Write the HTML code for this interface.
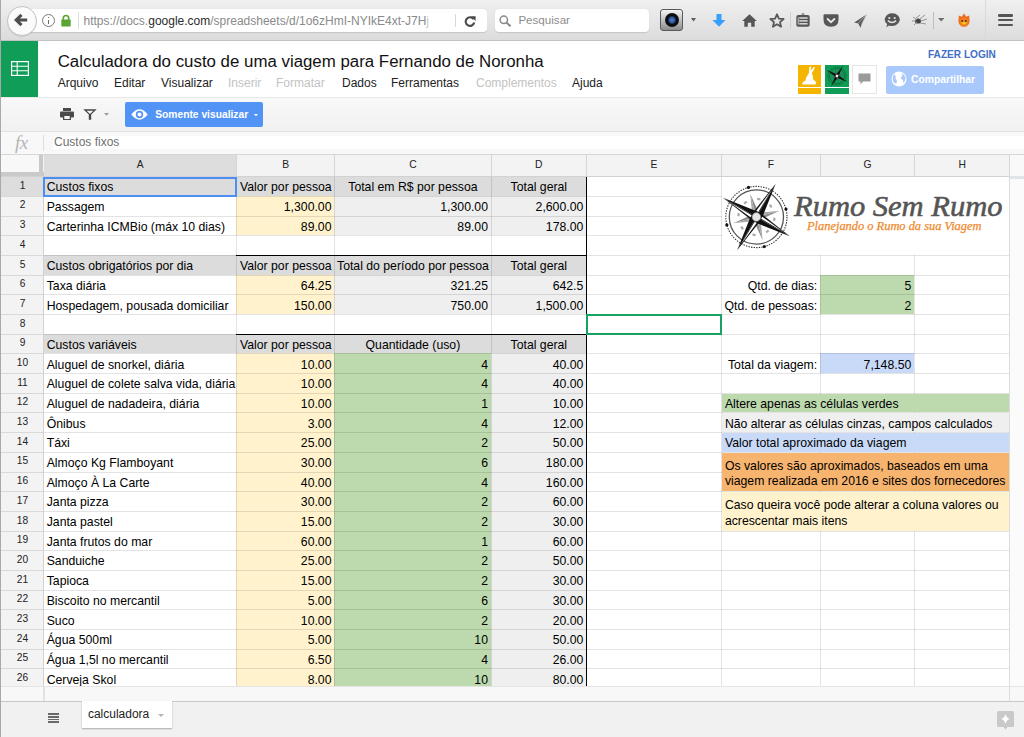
<!DOCTYPE html><html><head><meta charset="utf-8"><style>
html,body{margin:0;padding:0;}
body{width:1024px;height:737px;overflow:hidden;position:relative;font-family:"Liberation Sans", sans-serif;background:#fff;}
div{box-sizing:border-box;}
</style></head><body>
<div style="position:absolute;left:0px;top:0px;width:1024px;height:40px;background:linear-gradient(#f0f0f0,#dcdcdc);"></div>
<div style="position:absolute;left:0px;top:40px;width:1024px;height:1px;background:#c2c2c2;"></div>
<div style="position:absolute;left:14px;top:9px;width:473px;height:23px;background:#fff;border-radius:4px;box-shadow:0 0.5px 1px rgba(0,0,0,.12);"></div>
<div style="position:absolute;left:6.5px;top:5.5px;width:30px;height:30px;border-radius:50%;background:#fbfbfb;border:1px solid #c2c2c2;box-shadow:0 1px 1px rgba(0,0,0,.08);"></div>
<svg style="position:absolute;left:14px;top:13px" width="14" height="14" viewBox="0 0 14 14"><path d="M7.5 1.8 L2.2 7 L7.5 12.2 M2.6 7 H13.2" stroke="#4f4f4f" stroke-width="3.1" fill="none" stroke-linejoin="miter"/></svg>
<div style="position:absolute;left:42px;top:14px;width:13px;height:13px;border-radius:50%;border:1px solid #7a7a7a;"></div>
<div style="position:absolute;left:48px;top:17px;width:1.4px;height:1.4px;background:#6a6a6a;"></div>
<div style="position:absolute;left:48px;top:19.5px;width:1.4px;height:4.5px;background:#6a6a6a;"></div>
<svg style="position:absolute;left:61px;top:14px" width="10" height="13" viewBox="0 0 10 13"><path d="M2.3 6 V4.2 A2.7 2.7 0 0 1 7.7 4.2 V6" stroke="#5ba532" stroke-width="1.7" fill="none"/><rect x="0.3" y="5.6" width="9.4" height="6.8" fill="#5ba532" rx="0.6"/></svg>
<div style="position:absolute;left:78px;top:12px;width:1px;height:17px;background:#dcdcdc;"></div>
<div style="position:absolute;left:83.5px;top:14px;font-size:12px;line-height:14px;color:#8a8a8a;white-space:nowrap;">https://docs.<span style="color:#2b2b2b">google.com</span>/spreadsheets/d/1o6zHmI-NYIkE4xt-J7H<span style="color:#c8c8c8">j</span></div>
<div style="position:absolute;left:455px;top:14px;width:1px;height:13px;background:#d8d8d8;"></div>
<svg style="position:absolute;left:464px;top:16px" width="12" height="11" viewBox="0 0 12 11"><path d="M9.6 3.2 A4.3 4.3 0 1 0 10.2 6.5" stroke="#4a4a4a" stroke-width="2.1" fill="none"/><path d="M6.8 0.3 L11.6 0.3 L11.6 5 Z" fill="#4a4a4a"/></svg>
<div style="position:absolute;left:494.5px;top:9px;width:154px;height:23px;background:#fff;border-radius:4px;box-shadow:0 0.5px 1px rgba(0,0,0,.12);"></div>
<svg style="position:absolute;left:499px;top:15px" width="13" height="12" viewBox="0 0 13 12"><circle cx="4.8" cy="4.8" r="3.7" stroke="#8a8a8a" stroke-width="1.5" fill="none"/><path d="M7.5 7.5 L11.6 11.3" stroke="#8a8a8a" stroke-width="2" /></svg>
<div style="position:absolute;left:518.4px;top:13px;font-size:11.6px;line-height:14px;color:#8c8c8c;white-space:nowrap;">Pesquisar</div>
<div style="position:absolute;left:660px;top:9px;width:23px;height:22px;border-radius:3px;background:linear-gradient(#f4f4f4,#8d8d8d);border:1px solid #5a5a5a;"></div>
<div style="position:absolute;left:664.5px;top:13px;width:14px;height:14px;border-radius:50%;background:radial-gradient(circle at 50% 50%,#5a86d0 0,#2a4f90 30%,#0a0a12 45%,#111 70%,#333 100%);"></div>
<svg style="position:absolute;left:691px;top:18px" width="6" height="4"><path d="M0 0 H5 L2.5 3.5Z" fill="#5a5a5a"/></svg>
<svg style="position:absolute;left:712px;top:14px" width="14" height="13" viewBox="0 0 14 13"><path d="M4.5 0 H9.5 V6 H13.5 L7 12.8 L0.5 6 H4.5 Z" fill="#37a0fb"/></svg>
<svg style="position:absolute;left:742px;top:14px" width="15" height="13" viewBox="0 0 15 13"><path d="M7.5 0.3 L14.8 7 L12.7 7 L12.7 12.8 L9.2 12.8 L9.2 8.8 L5.8 8.8 L5.8 12.8 L2.3 12.8 L2.3 7 L0.2 7 Z" fill="#565656"/></svg>
<svg style="position:absolute;left:769px;top:13px" width="16" height="15" viewBox="0 0 16 15"><path d="M8 1.3 L9.9 5.6 L14.6 6 L11 9.1 L12.1 13.7 L8 11.3 L3.9 13.7 L5 9.1 L1.4 6 L6.1 5.6 Z" stroke="#575757" stroke-width="1.8" fill="none" stroke-linejoin="round"/></svg>
<div style="position:absolute;left:790px;top:12px;width:1px;height:17px;background:#cfcfcf;"></div>
<svg style="position:absolute;left:796px;top:13px" width="14" height="14" viewBox="0 0 14 14"><path d="M5 1.6 L7 0 L9 1.6 Z" fill="#555"/><rect x="0.3" y="2" width="13.4" height="11.7" rx="2" fill="#565656"/><rect x="3.3" y="4.3" width="8.3" height="1.4" fill="#e4e4e4"/><rect x="3.3" y="7.2" width="8.3" height="1.4" fill="#e4e4e4"/><rect x="3.3" y="10.1" width="8.3" height="1.4" fill="#e4e4e4"/><rect x="1.8" y="4.3" width="0.8" height="7.2" fill="#e4e4e4"/></svg>
<svg style="position:absolute;left:823px;top:14px" width="16" height="13" viewBox="0 0 16 13"><path d="M0.5 1.5 Q0.5 0.2 1.8 0.2 H14.2 Q15.5 0.2 15.5 1.5 V5.5 Q15.5 12.8 8 12.8 Q0.5 12.8 0.5 5.5 Z" fill="#575757"/><path d="M4.6 5 L8 8.2 L11.4 5" stroke="#e6e6e6" stroke-width="1.9" fill="none" stroke-linecap="round"/></svg>
<svg style="position:absolute;left:854px;top:14px" width="13" height="14" viewBox="0 0 13 14"><path d="M12.8 0.2 L0.2 8.6 L4.2 9.4 L6.6 13.8 L7.6 10.4 Z" fill="#5b5b5b"/><path d="M4.2 9.4 L12.8 0.2 L7.6 10.4" stroke="#d8d8d8" stroke-width="0.6" fill="none"/></svg>
<svg style="position:absolute;left:884px;top:13px" width="16" height="15" viewBox="0 0 16 15"><path d="M8 0.3 A7.6 6.3 0 1 1 5.2 12.4 L2.2 14.2 L3.2 11.2 A7.6 6.3 0 0 1 8 0.3 Z" fill="#575757"/><circle cx="5.3" cy="5" r="1.1" fill="#e4e4e4"/><circle cx="10.7" cy="5" r="1.1" fill="#e4e4e4"/><path d="M3.8 7.6 Q8 11.2 12.2 7.6" stroke="#e4e4e4" stroke-width="1.4" fill="none"/></svg>
<svg style="position:absolute;left:911px;top:14px" width="17" height="12" viewBox="0 0 17 12"><ellipse cx="7" cy="7" rx="3" ry="2.6" fill="#444"/><path d="M2 3 L6 6 M3 11 L6 8 M9 5 L14 1 M10 7 L16 5 M9 9 L15 10 M5 4 L9 1 M1 7 L5 7" stroke="#8a8a8a" stroke-width="0.9"/></svg>
<div style="position:absolute;left:933px;top:12px;width:1px;height:17px;background:#bdbdbd;"></div>
<svg style="position:absolute;left:938px;top:18px" width="7" height="4"><path d="M0 0 H6.4 L3.2 3.6Z" fill="#6b6b6b"/></svg>
<svg style="position:absolute;left:957px;top:13px" width="14" height="15" viewBox="0 0 14 15"><path d="M7 0.5 L9.2 3.8 L12.2 2.5 L12.4 6.5 A5.6 5.6 0 1 1 1.6 6.5 L1.8 2.5 L4.8 3.8 Z" fill="#ee6a1c"/><circle cx="7" cy="9.2" r="4.6" fill="#f27d20"/><path d="M4 9.5 Q7 13.8 10 9.5 Q7 8 4 9.5Z" fill="#f8c313"/><circle cx="5.2" cy="8" r="0.9" fill="#5a2a10"/><circle cx="8.8" cy="8" r="0.9" fill="#5a2a10"/></svg>
<div style="position:absolute;left:985px;top:0px;width:1px;height:40px;background:#d9d9d9;"></div>
<div style="position:absolute;left:998px;top:14px;width:15px;height:2.6px;border-radius:1.3px;background:#555;"></div>
<div style="position:absolute;left:998px;top:18.8px;width:15px;height:2.6px;border-radius:1.3px;background:#555;"></div>
<div style="position:absolute;left:998px;top:23.6px;width:15px;height:2.6px;border-radius:1.3px;background:#555;"></div>
<div style="position:absolute;left:1px;top:41px;width:37px;height:56px;background:#0f9d58;"></div>
<svg style="position:absolute;left:11px;top:61px" width="18" height="15" viewBox="0 0 18 15"><rect x="0.6" y="0.6" width="16.8" height="13.8" fill="none" stroke="#fff" stroke-width="1.2"/><path d="M0.6 5.2 H17.4 M0.6 9.8 H17.4 M6.2 0.6 V14.4" stroke="#fff" stroke-width="1.1"/></svg>
<div style="position:absolute;left:57.7px;top:51.7px;font-size:16.85px;line-height:19px;color:#111;white-space:nowrap;">Calculadora do custo de uma viagem para Fernando de Noronha</div>
<div style="position:absolute;left:57.7px;top:75.8px;font-size:12px;line-height:14px;color:#222;white-space:nowrap;">Arquivo</div>
<div style="position:absolute;left:114px;top:75.8px;font-size:12px;line-height:14px;color:#222;white-space:nowrap;">Editar</div>
<div style="position:absolute;left:161px;top:75.8px;font-size:12px;line-height:14px;color:#222;white-space:nowrap;">Visualizar</div>
<div style="position:absolute;left:228px;top:75.8px;font-size:12px;line-height:14px;color:#c3c3c3;white-space:nowrap;">Inserir</div>
<div style="position:absolute;left:276px;top:75.8px;font-size:12px;line-height:14px;color:#c3c3c3;white-space:nowrap;">Formatar</div>
<div style="position:absolute;left:342px;top:75.8px;font-size:12px;line-height:14px;color:#222;white-space:nowrap;">Dados</div>
<div style="position:absolute;left:391px;top:75.8px;font-size:12px;line-height:14px;color:#222;white-space:nowrap;">Ferramentas</div>
<div style="position:absolute;left:476px;top:75.8px;font-size:12px;line-height:14px;color:#c3c3c3;white-space:nowrap;">Complementos</div>
<div style="position:absolute;left:572px;top:75.8px;font-size:12px;line-height:14px;color:#222;white-space:nowrap;">Ajuda</div>
<div style="position:absolute;left:928px;top:48.5px;font-size:10.1px;line-height:12px;font-weight:bold;color:#3f6fc6;white-space:nowrap;">FAZER LOGIN</div>
<div style="position:absolute;left:798px;top:65px;width:23px;height:29px;background:#f4b400;"></div>
<div style="position:absolute;left:798px;top:87px;width:23px;height:1px;background:#fff;"></div>
<svg style="position:absolute;left:798px;top:65px" width="23" height="22" viewBox="0 0 23 22"><path d="M11.5 1.5 Q13 1 13.2 2.5 L12.6 6 L15.5 2.2 Q16.8 1.6 16.8 3 L13.8 8.5 Q15.5 11 15 14 L17.5 16.5 Q19 18 17.5 19.5 L4.5 19.5 Q3.5 18.5 5 17 L7.5 15.5 Q8 11.5 10.8 8.6 Z" fill="#fff"/></svg>
<div style="position:absolute;left:825px;top:65px;width:24px;height:29px;background:#0f9d58;"></div>
<div style="position:absolute;left:825px;top:87px;width:24px;height:1px;background:#fff;"></div>
<svg style="position:absolute;left:825px;top:65px" width="24" height="22" viewBox="0 0 24 22"><circle cx="12" cy="11" r="9" stroke="#062" stroke-width="1" stroke-dasharray="1.2 0.9" fill="none"/><circle cx="12" cy="11" r="7.5" stroke="#1b4a2c" stroke-width="0.6" fill="none"/><path d="M13.39 11.80 L18.00 0.61 L10.61 10.20 Z" fill="#111"/><path d="M11.20 12.39 L22.39 17.00 L12.80 9.61 Z" fill="#111"/><path d="M10.61 10.20 L6.00 21.39 L13.39 11.80 Z" fill="#111"/><path d="M12.80 9.61 L1.61 5.00 L11.20 12.39 Z" fill="#111"/><path d="M12.26 11.97 L18.76 9.19 L11.74 10.03 Z" fill="#555"/><path d="M11.03 11.26 L13.81 17.76 L12.97 10.74 Z" fill="#555"/><path d="M11.74 10.03 L5.24 12.81 L12.26 11.97 Z" fill="#555"/><path d="M12.97 10.74 L10.19 4.24 L11.03 11.26 Z" fill="#555"/><circle cx="12" cy="11" r="1.2" fill="#eee"/></svg>
<div style="position:absolute;left:852px;top:65px;width:25px;height:29px;background:#fff;border:1px solid #e6e6e6;"></div>
<svg style="position:absolute;left:858px;top:73px" width="13" height="12" viewBox="0 0 13 12"><path d="M0.5 0.5 H12.5 V8.5 H5 L2.5 11.5 V8.5 H0.5 Z" fill="#9a9a9a"/></svg>
<div style="position:absolute;left:886px;top:65.5px;width:98px;height:28px;background:#a9c8fb;border-radius:2px;"></div>
<svg style="position:absolute;left:891px;top:71px" width="16" height="16" viewBox="0 0 16 16"><circle cx="8" cy="8" r="7.5" fill="#fff"/><path d="M3 3.5 Q5.5 5 4.5 7.5 Q6.5 9 5.5 12.5 Q3.5 13 2 10 Q1 6 3 3.5Z M9 1.5 Q12.5 3 11 5.5 Q9 6 10.5 8 Q13 9 12 12.5 Q14.5 10 14.5 7 Q14 3 9 1.5Z" fill="#a9c8fb"/></svg>
<div style="position:absolute;left:911px;top:73.5px;font-size:10.3px;line-height:12px;font-weight:bold;color:#fff;white-space:nowrap;">Compartilhar</div>
<div style="position:absolute;left:0px;top:97px;width:1024px;height:1px;background:#e9e9e9;"></div>
<div style="position:absolute;left:1px;top:98px;width:1023px;height:33px;background:linear-gradient(#f8f8f8,#f1f1f1);"></div>
<div style="position:absolute;left:1px;top:131px;width:1023px;height:1px;background:#e2e2e2;"></div>
<svg style="position:absolute;left:60px;top:108px" width="14" height="12" viewBox="0 0 14 12"><rect x="3" y="0" width="8" height="3" fill="#4a4a4a"/><rect x="0" y="3.5" width="14" height="6" rx="1" fill="#4a4a4a"/><rect x="3" y="7" width="8" height="5" fill="#4a4a4a"/><rect x="4.3" y="8" width="5.4" height="3" fill="#f4f4f4"/></svg>
<svg style="position:absolute;left:83px;top:109px" width="14" height="11" viewBox="0 0 14 11"><path d="M0.3 0.3 H13.7 L8.2 5.5 V10.8 H5.8 V5.5 Z" fill="#454545"/><path d="M3.6 1.8 H10.4 L7 5 Z" fill="#f4f4f4"/></svg>
<svg style="position:absolute;left:104px;top:113px" width="5" height="3"><path d="M0 0 H5 L2.5 2.8Z" fill="#9a9a9a"/></svg>
<div style="position:absolute;left:125px;top:102px;width:138px;height:25px;background:#5294f5;border-radius:2px;"></div>
<svg style="position:absolute;left:131px;top:107.5px" width="17" height="13" viewBox="0 0 17 13"><path d="M0.3 6.5 Q8.5 -3.8 16.7 6.5 Q8.5 16.8 0.3 6.5Z" fill="#fff"/><circle cx="8.5" cy="6.5" r="3.7" fill="#5294f5"/><circle cx="8.5" cy="6.5" r="2" fill="#fff"/></svg>
<div style="position:absolute;left:155.2px;top:109px;font-size:10.27px;line-height:12px;font-weight:bold;color:#fff;white-space:nowrap;">Somente visualizar</div>
<svg style="position:absolute;left:254px;top:114px" width="4" height="3"><path d="M0 0 H4 L2 2.2Z" fill="#fff"/></svg>
<div style="position:absolute;left:1px;top:132px;width:1023px;height:23px;background:#f8f8f8;"></div>
<div style="position:absolute;left:53px;top:136px;width:971px;height:13px;background:#fff;"></div>
<div style="position:absolute;left:15px;top:134px;font-family:'Liberation Serif',serif;font-style:italic;font-size:19px;line-height:18px;color:#b5b5b5;white-space:nowrap;letter-spacing:-0.5px;">fx</div>
<div style="position:absolute;left:43px;top:135px;width:1px;height:16px;background:#dcdcdc;"></div>
<div style="position:absolute;left:54px;top:135px;font-size:12px;line-height:14px;color:#707070;white-space:nowrap;">Custos fixos</div>
<div style="position:absolute;left:1px;top:154px;width:1023px;height:1px;background:#d6d6d6;"></div>
<div style="position:absolute;left:1px;top:155px;width:1023px;height:21px;background:#f3f3f3;"></div>
<div style="position:absolute;left:1px;top:155px;width:39px;height:17px;background:#f8f8f8;"></div>
<div style="position:absolute;left:39px;top:155px;width:4px;height:21px;background:#c9c9c9;"></div>
<div style="position:absolute;left:1px;top:172px;width:43px;height:4px;background:#c9c9c9;"></div>
<div style="position:absolute;left:44px;top:155px;width:192px;height:21px;background:#dddddd;"></div>
<div style="position:absolute;left:236px;top:155px;width:1px;height:21px;background:#d6d6d6;"></div>
<div style="position:absolute;left:334px;top:155px;width:1px;height:21px;background:#d6d6d6;"></div>
<div style="position:absolute;left:491px;top:155px;width:1px;height:21px;background:#d6d6d6;"></div>
<div style="position:absolute;left:586px;top:155px;width:1px;height:21px;background:#d6d6d6;"></div>
<div style="position:absolute;left:721px;top:155px;width:1px;height:21px;background:#d6d6d6;"></div>
<div style="position:absolute;left:820px;top:155px;width:1px;height:21px;background:#d6d6d6;"></div>
<div style="position:absolute;left:914px;top:155px;width:1px;height:21px;background:#d6d6d6;"></div>
<div style="position:absolute;left:1009px;top:155px;width:1px;height:21px;background:#d6d6d6;"></div>
<div style="position:absolute;left:43px;top:176px;width:967px;height:1px;background:#cfcfcf;"></div>
<div style="position:absolute;left:43.4px;top:159.4px;width:193.5px;text-align:center;font-size:10.3px;line-height:12px;color:#222;">A</div>
<div style="position:absolute;left:236.9px;top:159.4px;width:97.8px;text-align:center;font-size:10.3px;line-height:12px;color:#222;">B</div>
<div style="position:absolute;left:334.7px;top:159.4px;width:156.5px;text-align:center;font-size:10.3px;line-height:12px;color:#222;">C</div>
<div style="position:absolute;left:491.2px;top:159.4px;width:95.3px;text-align:center;font-size:10.3px;line-height:12px;color:#222;">D</div>
<div style="position:absolute;left:586.5px;top:159.4px;width:135.1px;text-align:center;font-size:10.3px;line-height:12px;color:#222;">E</div>
<div style="position:absolute;left:721.6px;top:159.4px;width:98.8px;text-align:center;font-size:10.3px;line-height:12px;color:#222;">F</div>
<div style="position:absolute;left:820.4px;top:159.4px;width:94.1px;text-align:center;font-size:10.3px;line-height:12px;color:#222;">G</div>
<div style="position:absolute;left:914.5px;top:159.4px;width:95.3px;text-align:center;font-size:10.3px;line-height:12px;color:#222;">H</div>
<div style="position:absolute;left:1010px;top:155px;width:14px;height:21px;background:#f9f9f9;"></div>
<div style="position:absolute;left:1009px;top:176px;width:15px;height:511px;background:#fbfbfb;"></div>
<div style="position:absolute;left:1010px;top:176px;width:14px;height:3px;background:#e2e5e8;"></div>
<div style="position:absolute;left:1px;top:176px;width:43px;height:511px;background:#f3f3f3;"></div>
<div style="position:absolute;left:43px;top:176px;width:966px;height:511px;background:#fff;"></div>
<div style="position:absolute;left:43px;top:176px;width:543px;height:20px;background:#dcdcdc;"></div>
<div style="position:absolute;left:43px;top:255px;width:543px;height:20px;background:#dcdcdc;"></div>
<div style="position:absolute;left:43px;top:334px;width:543px;height:19px;background:#dcdcdc;"></div>
<div style="position:absolute;left:236px;top:196px;width:98px;height:39px;background:#fff2cc;"></div>
<div style="position:absolute;left:334px;top:196px;width:252px;height:39px;background:#efefef;"></div>
<div style="position:absolute;left:236px;top:275px;width:98px;height:39px;background:#fff2cc;"></div>
<div style="position:absolute;left:334px;top:275px;width:252px;height:39px;background:#efefef;"></div>
<div style="position:absolute;left:236px;top:353px;width:98px;height:334px;background:#fff2cc;"></div>
<div style="position:absolute;left:334px;top:353px;width:157px;height:334px;background:#bcdaae;"></div>
<div style="position:absolute;left:491px;top:353px;width:95px;height:334px;background:#efefef;"></div>
<div style="position:absolute;left:820px;top:275px;width:94px;height:39px;background:#bcdaae;"></div>
<div style="position:absolute;left:820px;top:353px;width:94px;height:20px;background:#c9daf8;"></div>
<div style="position:absolute;left:1px;top:196px;width:1008px;height:1px;background:rgba(0,0,0,0.11);"></div>
<div style="position:absolute;left:1px;top:216px;width:1008px;height:1px;background:rgba(0,0,0,0.11);"></div>
<div style="position:absolute;left:1px;top:235px;width:1008px;height:1px;background:rgba(0,0,0,0.11);"></div>
<div style="position:absolute;left:1px;top:255px;width:1008px;height:1px;background:rgba(0,0,0,0.11);"></div>
<div style="position:absolute;left:1px;top:275px;width:1008px;height:1px;background:rgba(0,0,0,0.11);"></div>
<div style="position:absolute;left:1px;top:294px;width:1008px;height:1px;background:rgba(0,0,0,0.11);"></div>
<div style="position:absolute;left:1px;top:314px;width:1008px;height:1px;background:rgba(0,0,0,0.11);"></div>
<div style="position:absolute;left:1px;top:334px;width:1008px;height:1px;background:rgba(0,0,0,0.11);"></div>
<div style="position:absolute;left:1px;top:353px;width:1008px;height:1px;background:rgba(0,0,0,0.11);"></div>
<div style="position:absolute;left:1px;top:373px;width:1008px;height:1px;background:rgba(0,0,0,0.11);"></div>
<div style="position:absolute;left:1px;top:393px;width:1008px;height:1px;background:rgba(0,0,0,0.11);"></div>
<div style="position:absolute;left:1px;top:412px;width:1008px;height:1px;background:rgba(0,0,0,0.11);"></div>
<div style="position:absolute;left:1px;top:432px;width:1008px;height:1px;background:rgba(0,0,0,0.11);"></div>
<div style="position:absolute;left:1px;top:452px;width:1008px;height:1px;background:rgba(0,0,0,0.11);"></div>
<div style="position:absolute;left:1px;top:472px;width:1008px;height:1px;background:rgba(0,0,0,0.11);"></div>
<div style="position:absolute;left:1px;top:491px;width:1008px;height:1px;background:rgba(0,0,0,0.11);"></div>
<div style="position:absolute;left:1px;top:511px;width:1008px;height:1px;background:rgba(0,0,0,0.11);"></div>
<div style="position:absolute;left:1px;top:531px;width:1008px;height:1px;background:rgba(0,0,0,0.11);"></div>
<div style="position:absolute;left:1px;top:550px;width:1008px;height:1px;background:rgba(0,0,0,0.11);"></div>
<div style="position:absolute;left:1px;top:570px;width:1008px;height:1px;background:rgba(0,0,0,0.11);"></div>
<div style="position:absolute;left:1px;top:590px;width:1008px;height:1px;background:rgba(0,0,0,0.11);"></div>
<div style="position:absolute;left:1px;top:609px;width:1008px;height:1px;background:rgba(0,0,0,0.11);"></div>
<div style="position:absolute;left:1px;top:629px;width:1008px;height:1px;background:rgba(0,0,0,0.11);"></div>
<div style="position:absolute;left:1px;top:649px;width:1008px;height:1px;background:rgba(0,0,0,0.11);"></div>
<div style="position:absolute;left:1px;top:668px;width:1008px;height:1px;background:rgba(0,0,0,0.11);"></div>
<div style="position:absolute;left:1px;top:688px;width:1008px;height:1px;background:rgba(0,0,0,0.11);"></div>
<div style="position:absolute;left:43px;top:176px;width:1px;height:511px;background:rgba(0,0,0,0.11);"></div>
<div style="position:absolute;left:236px;top:176px;width:1px;height:511px;background:rgba(0,0,0,0.11);"></div>
<div style="position:absolute;left:334px;top:176px;width:1px;height:511px;background:rgba(0,0,0,0.11);"></div>
<div style="position:absolute;left:491px;top:176px;width:1px;height:511px;background:rgba(0,0,0,0.11);"></div>
<div style="position:absolute;left:586px;top:176px;width:1px;height:511px;background:rgba(0,0,0,0.11);"></div>
<div style="position:absolute;left:721px;top:176px;width:1px;height:511px;background:rgba(0,0,0,0.11);"></div>
<div style="position:absolute;left:820px;top:176px;width:1px;height:511px;background:rgba(0,0,0,0.11);"></div>
<div style="position:absolute;left:914px;top:176px;width:1px;height:511px;background:rgba(0,0,0,0.11);"></div>
<div style="position:absolute;left:1009px;top:176px;width:1px;height:511px;background:rgba(0,0,0,0.11);"></div>
<div style="position:absolute;left:722px;top:394px;width:288px;height:18px;background:#bcdaae;"></div>
<div style="position:absolute;left:722px;top:413px;width:288px;height:19px;background:#efefef;"></div>
<div style="position:absolute;left:722px;top:433px;width:288px;height:19px;background:#c9daf8;"></div>
<div style="position:absolute;left:722px;top:453px;width:288px;height:38px;background:#f7b46f;"></div>
<div style="position:absolute;left:722px;top:492px;width:288px;height:39px;background:#fff2cc;"></div>
<div style="position:absolute;left:722px;top:177px;width:287px;height:78px;background:#fff;"></div>
<svg style="position:absolute;left:722px;top:177px" width="287" height="78" viewBox="0 0 287 78"><circle cx="34.39999999999998" cy="40" r="30.6" fill="none" stroke="#333" stroke-width="1.1" stroke-dasharray="1.4 1.2"/><circle cx="34.39999999999998" cy="40" r="27.1" fill="none" stroke="#555" stroke-width="1.3"/><path d="M34.40 40.00 L35.44 43.86 L57.58 33.79 Z" fill="#8a8a8a"/><path d="M34.40 40.00 L33.36 36.14 L57.58 33.79 Z" fill="#a8a8a8"/><path d="M34.40 40.00 L30.54 41.04 L40.61 63.18 Z" fill="#8a8a8a"/><path d="M34.40 40.00 L38.26 38.96 L40.61 63.18 Z" fill="#a8a8a8"/><path d="M34.40 40.00 L33.36 36.14 L11.22 46.21 Z" fill="#8a8a8a"/><path d="M34.40 40.00 L35.44 43.86 L11.22 46.21 Z" fill="#a8a8a8"/><path d="M34.40 40.00 L38.26 38.96 L28.19 16.82 Z" fill="#8a8a8a"/><path d="M34.40 40.00 L30.54 41.04 L28.19 16.82 Z" fill="#a8a8a8"/><path d="M34.40 40.00 L39.25 42.80 L53.65 6.66 Z" fill="#111"/><path d="M34.40 40.00 L29.55 37.20 L53.65 6.66 Z" fill="#111"/><path d="M36.21 35.27 L34.13 34.07 L49.47 12.90 Z" fill="#fff"/><path d="M34.40 40.00 L31.60 44.85 L67.74 59.25 Z" fill="#111"/><path d="M34.40 40.00 L37.20 35.15 L67.74 59.25 Z" fill="#111"/><path d="M39.13 41.81 L40.33 39.73 L61.50 55.07 Z" fill="#fff"/><path d="M34.40 40.00 L29.55 37.20 L15.15 73.34 Z" fill="#111"/><path d="M34.40 40.00 L39.25 42.80 L15.15 73.34 Z" fill="#111"/><path d="M32.59 44.73 L34.67 45.93 L19.33 67.10 Z" fill="#fff"/><path d="M34.40 40.00 L37.20 35.15 L1.06 20.75 Z" fill="#111"/><path d="M34.40 40.00 L31.60 44.85 L1.06 20.75 Z" fill="#111"/><path d="M29.67 38.19 L28.47 40.27 L7.30 24.93 Z" fill="#fff"/><rect x="35.15" y="21.05" width="3.2" height="2.2" fill="#aaa" transform="rotate(7.5 36.75 22.15)"/><rect x="47.08" y="27.94" width="3.2" height="2.2" fill="#aaa" transform="rotate(52.5 48.68 29.04)"/><rect x="50.65" y="41.25" width="3.2" height="2.2" fill="#aaa" transform="rotate(97.5 52.25 42.35)"/><rect x="43.76" y="53.18" width="3.2" height="2.2" fill="#aaa" transform="rotate(142.5 45.36 54.28)"/><rect x="30.45" y="56.75" width="3.2" height="2.2" fill="#aaa" transform="rotate(187.5 32.05 57.85)"/><rect x="18.52" y="49.86" width="3.2" height="2.2" fill="#aaa" transform="rotate(232.5 20.12 50.96)"/><rect x="14.95" y="36.55" width="3.2" height="2.2" fill="#aaa" transform="rotate(277.5 16.55 37.65)"/><rect x="21.84" y="24.62" width="3.2" height="2.2" fill="#aaa" transform="rotate(322.5 23.44 25.72)"/><circle cx="34.39999999999998" cy="40" r="4.4" fill="#e6e6e6" stroke="#777" stroke-width="0.6"/><circle cx="26.48" cy="10.44" r="1.6" fill="#111"/><circle cx="63.96" cy="32.08" r="1.6" fill="#111"/><circle cx="42.32" cy="69.56" r="1.6" fill="#111"/><circle cx="4.84" cy="47.92" r="1.6" fill="#111"/></svg>
<div style="position:absolute;left:793.9px;top:191px;font-family:'Liberation Serif',serif;font-style:italic;font-size:28.6px;line-height:32px;color:#555;-webkit-text-stroke:0.55px #555;transform:scaleX(1.067);transform-origin:0 0;white-space:nowrap;">Rumo Sem Rumo</div>
<div style="position:absolute;left:806.5px;top:219px;font-family:'Liberation Serif',serif;font-style:italic;font-size:12px;-webkit-text-stroke:0.25px #ef8a2e;transform:scaleX(1.034);transform-origin:0 0;line-height:14px;color:#ef8a2e;white-space:nowrap;">Planejando o Rumo da sua Viagem</div>
<div style="position:absolute;left:586px;top:176px;width:1px;height:139px;background:#000;"></div>
<div style="position:absolute;left:586px;top:334px;width:1px;height:353px;background:#000;"></div>
<div style="position:absolute;left:236px;top:255px;width:351px;height:1px;background:#000;"></div>
<div style="position:absolute;left:236px;top:334px;width:351px;height:1px;background:#000;"></div>
<div style="position:absolute;top:180.36px;white-space:nowrap;font-size:12.25px;line-height:14px;color:#000;left:46.7px;">Custos fixos</div>
<div style="position:absolute;top:180.36px;white-space:nowrap;font-size:12.25px;line-height:14px;color:#000;left:236.9px;width:97.8px;text-align:center;">Valor por pessoa</div>
<div style="position:absolute;top:180.36px;white-space:nowrap;font-size:12.25px;line-height:14px;color:#000;left:334.7px;width:156.5px;text-align:center;">Total em R$ por pessoa</div>
<div style="position:absolute;top:180.36px;white-space:nowrap;font-size:12.25px;line-height:14px;color:#000;left:491.2px;width:95.3px;text-align:center;">Total geral</div>
<div style="position:absolute;top:200.05px;white-space:nowrap;font-size:12.25px;line-height:14px;color:#000;left:46.7px;">Passagem</div>
<div style="position:absolute;top:200.05px;white-space:nowrap;font-size:12.25px;line-height:14px;color:#000;left:236.9px;width:94.6px;text-align:right;">1,300.00</div>
<div style="position:absolute;top:200.05px;white-space:nowrap;font-size:12.25px;line-height:14px;color:#000;left:334.7px;width:153.3px;text-align:right;">1,300.00</div>
<div style="position:absolute;top:200.05px;white-space:nowrap;font-size:12.25px;line-height:14px;color:#000;left:491.2px;width:92.1px;text-align:right;">2,600.00</div>
<div style="position:absolute;top:219.74px;white-space:nowrap;font-size:12.25px;line-height:14px;color:#000;left:46.7px;">Carterinha ICMBio (máx 10 dias)</div>
<div style="position:absolute;top:219.74px;white-space:nowrap;font-size:12.25px;line-height:14px;color:#000;left:236.9px;width:94.6px;text-align:right;">89.00</div>
<div style="position:absolute;top:219.74px;white-space:nowrap;font-size:12.25px;line-height:14px;color:#000;left:334.7px;width:153.3px;text-align:right;">89.00</div>
<div style="position:absolute;top:219.74px;white-space:nowrap;font-size:12.25px;line-height:14px;color:#000;left:491.2px;width:92.1px;text-align:right;">178.00</div>
<div style="position:absolute;top:259.12px;white-space:nowrap;font-size:12.25px;line-height:14px;color:#000;left:46.7px;">Custos obrigatórios por dia</div>
<div style="position:absolute;top:259.12px;white-space:nowrap;font-size:12.25px;line-height:14px;color:#000;left:236.9px;width:97.8px;text-align:center;">Valor por pessoa</div>
<div style="position:absolute;top:259.12px;white-space:nowrap;font-size:12.25px;line-height:14px;color:#000;left:334.7px;width:156.5px;text-align:center;">Total do período por pessoa</div>
<div style="position:absolute;top:259.12px;white-space:nowrap;font-size:12.25px;line-height:14px;color:#000;left:491.2px;width:95.3px;text-align:center;">Total geral</div>
<div style="position:absolute;top:278.81px;white-space:nowrap;font-size:12.25px;line-height:14px;color:#000;left:46.7px;">Taxa diária</div>
<div style="position:absolute;top:278.81px;white-space:nowrap;font-size:12.25px;line-height:14px;color:#000;left:236.9px;width:94.6px;text-align:right;">64.25</div>
<div style="position:absolute;top:278.81px;white-space:nowrap;font-size:12.25px;line-height:14px;color:#000;left:334.7px;width:153.3px;text-align:right;">321.25</div>
<div style="position:absolute;top:278.81px;white-space:nowrap;font-size:12.25px;line-height:14px;color:#000;left:491.2px;width:92.1px;text-align:right;">642.5</div>
<div style="position:absolute;top:298.5px;white-space:nowrap;font-size:12.25px;line-height:14px;color:#000;left:46.7px;">Hospedagem, pousada domiciliar</div>
<div style="position:absolute;top:298.5px;white-space:nowrap;font-size:12.25px;line-height:14px;color:#000;left:236.9px;width:94.6px;text-align:right;">150.00</div>
<div style="position:absolute;top:298.5px;white-space:nowrap;font-size:12.25px;line-height:14px;color:#000;left:334.7px;width:153.3px;text-align:right;">750.00</div>
<div style="position:absolute;top:298.5px;white-space:nowrap;font-size:12.25px;line-height:14px;color:#000;left:491.2px;width:92.1px;text-align:right;">1,500.00</div>
<div style="position:absolute;top:337.88px;white-space:nowrap;font-size:12.25px;line-height:14px;color:#000;left:46.7px;">Custos variáveis</div>
<div style="position:absolute;top:337.88px;white-space:nowrap;font-size:12.25px;line-height:14px;color:#000;left:236.9px;width:97.8px;text-align:center;">Valor por pessoa</div>
<div style="position:absolute;top:337.88px;white-space:nowrap;font-size:12.25px;line-height:14px;color:#000;left:334.7px;width:156.5px;text-align:center;">Quantidade (uso)</div>
<div style="position:absolute;top:337.88px;white-space:nowrap;font-size:12.25px;line-height:14px;color:#000;left:491.2px;width:95.3px;text-align:center;">Total geral</div>
<div style="position:absolute;top:357.57px;white-space:nowrap;font-size:12.25px;line-height:14px;color:#000;left:46.7px;">Aluguel de snorkel, diária</div>
<div style="position:absolute;top:357.57px;white-space:nowrap;font-size:12.25px;line-height:14px;color:#000;left:236.9px;width:94.6px;text-align:right;">10.00</div>
<div style="position:absolute;top:357.57px;white-space:nowrap;font-size:12.25px;line-height:14px;color:#000;left:334.7px;width:153.3px;text-align:right;">4</div>
<div style="position:absolute;top:357.57px;white-space:nowrap;font-size:12.25px;line-height:14px;color:#000;left:491.2px;width:92.1px;text-align:right;">40.00</div>
<div style="position:absolute;top:377.26px;white-space:nowrap;font-size:12.25px;line-height:14px;color:#000;left:46.7px;">Aluguel de colete salva vida, diária</div>
<div style="position:absolute;top:377.26px;white-space:nowrap;font-size:12.25px;line-height:14px;color:#000;left:236.9px;width:94.6px;text-align:right;">10.00</div>
<div style="position:absolute;top:377.26px;white-space:nowrap;font-size:12.25px;line-height:14px;color:#000;left:334.7px;width:153.3px;text-align:right;">4</div>
<div style="position:absolute;top:377.26px;white-space:nowrap;font-size:12.25px;line-height:14px;color:#000;left:491.2px;width:92.1px;text-align:right;">40.00</div>
<div style="position:absolute;top:396.95px;white-space:nowrap;font-size:12.25px;line-height:14px;color:#000;left:46.7px;">Aluguel de nadadeira, diária</div>
<div style="position:absolute;top:396.95px;white-space:nowrap;font-size:12.25px;line-height:14px;color:#000;left:236.9px;width:94.6px;text-align:right;">10.00</div>
<div style="position:absolute;top:396.95px;white-space:nowrap;font-size:12.25px;line-height:14px;color:#000;left:334.7px;width:153.3px;text-align:right;">1</div>
<div style="position:absolute;top:396.95px;white-space:nowrap;font-size:12.25px;line-height:14px;color:#000;left:491.2px;width:92.1px;text-align:right;">10.00</div>
<div style="position:absolute;top:416.64px;white-space:nowrap;font-size:12.25px;line-height:14px;color:#000;left:46.7px;">Ônibus</div>
<div style="position:absolute;top:416.64px;white-space:nowrap;font-size:12.25px;line-height:14px;color:#000;left:236.9px;width:94.6px;text-align:right;">3.00</div>
<div style="position:absolute;top:416.64px;white-space:nowrap;font-size:12.25px;line-height:14px;color:#000;left:334.7px;width:153.3px;text-align:right;">4</div>
<div style="position:absolute;top:416.64px;white-space:nowrap;font-size:12.25px;line-height:14px;color:#000;left:491.2px;width:92.1px;text-align:right;">12.00</div>
<div style="position:absolute;top:436.33px;white-space:nowrap;font-size:12.25px;line-height:14px;color:#000;left:46.7px;">Táxi</div>
<div style="position:absolute;top:436.33px;white-space:nowrap;font-size:12.25px;line-height:14px;color:#000;left:236.9px;width:94.6px;text-align:right;">25.00</div>
<div style="position:absolute;top:436.33px;white-space:nowrap;font-size:12.25px;line-height:14px;color:#000;left:334.7px;width:153.3px;text-align:right;">2</div>
<div style="position:absolute;top:436.33px;white-space:nowrap;font-size:12.25px;line-height:14px;color:#000;left:491.2px;width:92.1px;text-align:right;">50.00</div>
<div style="position:absolute;top:456.02px;white-space:nowrap;font-size:12.25px;line-height:14px;color:#000;left:46.7px;">Almoço Kg Flamboyant</div>
<div style="position:absolute;top:456.02px;white-space:nowrap;font-size:12.25px;line-height:14px;color:#000;left:236.9px;width:94.6px;text-align:right;">30.00</div>
<div style="position:absolute;top:456.02px;white-space:nowrap;font-size:12.25px;line-height:14px;color:#000;left:334.7px;width:153.3px;text-align:right;">6</div>
<div style="position:absolute;top:456.02px;white-space:nowrap;font-size:12.25px;line-height:14px;color:#000;left:491.2px;width:92.1px;text-align:right;">180.00</div>
<div style="position:absolute;top:475.71px;white-space:nowrap;font-size:12.25px;line-height:14px;color:#000;left:46.7px;">Almoço À La Carte</div>
<div style="position:absolute;top:475.71px;white-space:nowrap;font-size:12.25px;line-height:14px;color:#000;left:236.9px;width:94.6px;text-align:right;">40.00</div>
<div style="position:absolute;top:475.71px;white-space:nowrap;font-size:12.25px;line-height:14px;color:#000;left:334.7px;width:153.3px;text-align:right;">4</div>
<div style="position:absolute;top:475.71px;white-space:nowrap;font-size:12.25px;line-height:14px;color:#000;left:491.2px;width:92.1px;text-align:right;">160.00</div>
<div style="position:absolute;top:495.4px;white-space:nowrap;font-size:12.25px;line-height:14px;color:#000;left:46.7px;">Janta pizza</div>
<div style="position:absolute;top:495.4px;white-space:nowrap;font-size:12.25px;line-height:14px;color:#000;left:236.9px;width:94.6px;text-align:right;">30.00</div>
<div style="position:absolute;top:495.4px;white-space:nowrap;font-size:12.25px;line-height:14px;color:#000;left:334.7px;width:153.3px;text-align:right;">2</div>
<div style="position:absolute;top:495.4px;white-space:nowrap;font-size:12.25px;line-height:14px;color:#000;left:491.2px;width:92.1px;text-align:right;">60.00</div>
<div style="position:absolute;top:515.09px;white-space:nowrap;font-size:12.25px;line-height:14px;color:#000;left:46.7px;">Janta pastel</div>
<div style="position:absolute;top:515.09px;white-space:nowrap;font-size:12.25px;line-height:14px;color:#000;left:236.9px;width:94.6px;text-align:right;">15.00</div>
<div style="position:absolute;top:515.09px;white-space:nowrap;font-size:12.25px;line-height:14px;color:#000;left:334.7px;width:153.3px;text-align:right;">2</div>
<div style="position:absolute;top:515.09px;white-space:nowrap;font-size:12.25px;line-height:14px;color:#000;left:491.2px;width:92.1px;text-align:right;">30.00</div>
<div style="position:absolute;top:534.78px;white-space:nowrap;font-size:12.25px;line-height:14px;color:#000;left:46.7px;">Janta frutos do mar</div>
<div style="position:absolute;top:534.78px;white-space:nowrap;font-size:12.25px;line-height:14px;color:#000;left:236.9px;width:94.6px;text-align:right;">60.00</div>
<div style="position:absolute;top:534.78px;white-space:nowrap;font-size:12.25px;line-height:14px;color:#000;left:334.7px;width:153.3px;text-align:right;">1</div>
<div style="position:absolute;top:534.78px;white-space:nowrap;font-size:12.25px;line-height:14px;color:#000;left:491.2px;width:92.1px;text-align:right;">60.00</div>
<div style="position:absolute;top:554.47px;white-space:nowrap;font-size:12.25px;line-height:14px;color:#000;left:46.7px;">Sanduiche</div>
<div style="position:absolute;top:554.47px;white-space:nowrap;font-size:12.25px;line-height:14px;color:#000;left:236.9px;width:94.6px;text-align:right;">25.00</div>
<div style="position:absolute;top:554.47px;white-space:nowrap;font-size:12.25px;line-height:14px;color:#000;left:334.7px;width:153.3px;text-align:right;">2</div>
<div style="position:absolute;top:554.47px;white-space:nowrap;font-size:12.25px;line-height:14px;color:#000;left:491.2px;width:92.1px;text-align:right;">50.00</div>
<div style="position:absolute;top:574.16px;white-space:nowrap;font-size:12.25px;line-height:14px;color:#000;left:46.7px;">Tapioca</div>
<div style="position:absolute;top:574.16px;white-space:nowrap;font-size:12.25px;line-height:14px;color:#000;left:236.9px;width:94.6px;text-align:right;">15.00</div>
<div style="position:absolute;top:574.16px;white-space:nowrap;font-size:12.25px;line-height:14px;color:#000;left:334.7px;width:153.3px;text-align:right;">2</div>
<div style="position:absolute;top:574.16px;white-space:nowrap;font-size:12.25px;line-height:14px;color:#000;left:491.2px;width:92.1px;text-align:right;">30.00</div>
<div style="position:absolute;top:593.85px;white-space:nowrap;font-size:12.25px;line-height:14px;color:#000;left:46.7px;">Biscoito no mercantil</div>
<div style="position:absolute;top:593.85px;white-space:nowrap;font-size:12.25px;line-height:14px;color:#000;left:236.9px;width:94.6px;text-align:right;">5.00</div>
<div style="position:absolute;top:593.85px;white-space:nowrap;font-size:12.25px;line-height:14px;color:#000;left:334.7px;width:153.3px;text-align:right;">6</div>
<div style="position:absolute;top:593.85px;white-space:nowrap;font-size:12.25px;line-height:14px;color:#000;left:491.2px;width:92.1px;text-align:right;">30.00</div>
<div style="position:absolute;top:613.54px;white-space:nowrap;font-size:12.25px;line-height:14px;color:#000;left:46.7px;">Suco</div>
<div style="position:absolute;top:613.54px;white-space:nowrap;font-size:12.25px;line-height:14px;color:#000;left:236.9px;width:94.6px;text-align:right;">10.00</div>
<div style="position:absolute;top:613.54px;white-space:nowrap;font-size:12.25px;line-height:14px;color:#000;left:334.7px;width:153.3px;text-align:right;">2</div>
<div style="position:absolute;top:613.54px;white-space:nowrap;font-size:12.25px;line-height:14px;color:#000;left:491.2px;width:92.1px;text-align:right;">20.00</div>
<div style="position:absolute;top:633.23px;white-space:nowrap;font-size:12.25px;line-height:14px;color:#000;left:46.7px;">Água 500ml</div>
<div style="position:absolute;top:633.23px;white-space:nowrap;font-size:12.25px;line-height:14px;color:#000;left:236.9px;width:94.6px;text-align:right;">5.00</div>
<div style="position:absolute;top:633.23px;white-space:nowrap;font-size:12.25px;line-height:14px;color:#000;left:334.7px;width:153.3px;text-align:right;">10</div>
<div style="position:absolute;top:633.23px;white-space:nowrap;font-size:12.25px;line-height:14px;color:#000;left:491.2px;width:92.1px;text-align:right;">50.00</div>
<div style="position:absolute;top:652.92px;white-space:nowrap;font-size:12.25px;line-height:14px;color:#000;left:46.7px;">Água 1,5l no mercantil</div>
<div style="position:absolute;top:652.92px;white-space:nowrap;font-size:12.25px;line-height:14px;color:#000;left:236.9px;width:94.6px;text-align:right;">6.50</div>
<div style="position:absolute;top:652.92px;white-space:nowrap;font-size:12.25px;line-height:14px;color:#000;left:334.7px;width:153.3px;text-align:right;">4</div>
<div style="position:absolute;top:652.92px;white-space:nowrap;font-size:12.25px;line-height:14px;color:#000;left:491.2px;width:92.1px;text-align:right;">26.00</div>
<div style="position:absolute;top:672.61px;white-space:nowrap;font-size:12.25px;line-height:14px;color:#000;left:46.7px;">Cerveja Skol</div>
<div style="position:absolute;top:672.61px;white-space:nowrap;font-size:12.25px;line-height:14px;color:#000;left:236.9px;width:94.6px;text-align:right;">8.00</div>
<div style="position:absolute;top:672.61px;white-space:nowrap;font-size:12.25px;line-height:14px;color:#000;left:334.7px;width:153.3px;text-align:right;">10</div>
<div style="position:absolute;top:672.61px;white-space:nowrap;font-size:12.25px;line-height:14px;color:#000;left:491.2px;width:92.1px;text-align:right;">80.00</div>
<div style="position:absolute;top:278.81px;white-space:nowrap;font-size:12.25px;line-height:14px;color:#000;left:721.6px;width:95.6px;text-align:right;">Qtd. de dias:</div>
<div style="position:absolute;top:278.81px;white-space:nowrap;font-size:12.25px;line-height:14px;color:#000;left:820.4px;width:90.9px;text-align:right;">5</div>
<div style="position:absolute;top:298.5px;white-space:nowrap;font-size:12.25px;line-height:14px;color:#000;left:721.6px;width:95.6px;text-align:right;">Qtd. de pessoas:</div>
<div style="position:absolute;top:298.5px;white-space:nowrap;font-size:12.25px;line-height:14px;color:#000;left:820.4px;width:90.9px;text-align:right;">2</div>
<div style="position:absolute;top:357.57px;white-space:nowrap;font-size:12.25px;line-height:14px;color:#000;left:721.6px;width:95.6px;text-align:right;">Total da viagem:</div>
<div style="position:absolute;top:357.57px;white-space:nowrap;font-size:12.25px;line-height:14px;color:#000;left:820.4px;width:90.9px;text-align:right;">7,148.50</div>
<div style="position:absolute;top:396.95px;white-space:nowrap;font-size:12.25px;line-height:14px;color:#000;left:724.9px;">Altere apenas as células verdes</div>
<div style="position:absolute;top:416.64px;white-space:nowrap;font-size:12.25px;line-height:14px;color:#000;left:724.9px;">Não alterar as células cinzas, campos calculados</div>
<div style="position:absolute;top:436.33px;white-space:nowrap;font-size:12.25px;line-height:14px;color:#000;left:724.9px;">Valor total aproximado da viagem</div>
<div style="position:absolute;top:458.62px;white-space:nowrap;font-size:12.25px;line-height:14px;color:#000;left:724.9px;">Os valores são aproximados, baseados em uma</div>
<div style="position:absolute;top:474.32px;white-space:nowrap;font-size:12.25px;line-height:14px;color:#000;left:724.9px;">viagem realizada em 2016 e sites dos fornecedores</div>
<div style="position:absolute;top:498.0px;white-space:nowrap;font-size:12.25px;line-height:14px;color:#000;left:724.9px;">Caso queira você pode alterar a coluna valores ou</div>
<div style="position:absolute;top:513.7px;white-space:nowrap;font-size:12.25px;line-height:14px;color:#000;left:724.9px;">acrescentar mais itens</div>
<div style="position:absolute;left:1px;top:176px;width:42px;height:20px;background:#dddddd;"></div>
<div style="position:absolute;left:1.5px;top:179.80px;width:42px;text-align:center;font-size:10.2px;line-height:12px;color:#222;">1</div>
<div style="position:absolute;left:1.5px;top:199.49px;width:42px;text-align:center;font-size:10.2px;line-height:12px;color:#222;">2</div>
<div style="position:absolute;left:1.5px;top:219.18px;width:42px;text-align:center;font-size:10.2px;line-height:12px;color:#222;">3</div>
<div style="position:absolute;left:1.5px;top:238.87px;width:42px;text-align:center;font-size:10.2px;line-height:12px;color:#222;">4</div>
<div style="position:absolute;left:1.5px;top:258.56px;width:42px;text-align:center;font-size:10.2px;line-height:12px;color:#222;">5</div>
<div style="position:absolute;left:1.5px;top:278.25px;width:42px;text-align:center;font-size:10.2px;line-height:12px;color:#222;">6</div>
<div style="position:absolute;left:1.5px;top:297.94px;width:42px;text-align:center;font-size:10.2px;line-height:12px;color:#222;">7</div>
<div style="position:absolute;left:1.5px;top:317.63px;width:42px;text-align:center;font-size:10.2px;line-height:12px;color:#222;">8</div>
<div style="position:absolute;left:1.5px;top:337.32px;width:42px;text-align:center;font-size:10.2px;line-height:12px;color:#222;">9</div>
<div style="position:absolute;left:1.5px;top:357.01px;width:42px;text-align:center;font-size:10.2px;line-height:12px;color:#222;">10</div>
<div style="position:absolute;left:1.5px;top:376.70px;width:42px;text-align:center;font-size:10.2px;line-height:12px;color:#222;">11</div>
<div style="position:absolute;left:1.5px;top:396.39px;width:42px;text-align:center;font-size:10.2px;line-height:12px;color:#222;">12</div>
<div style="position:absolute;left:1.5px;top:416.08px;width:42px;text-align:center;font-size:10.2px;line-height:12px;color:#222;">13</div>
<div style="position:absolute;left:1.5px;top:435.77px;width:42px;text-align:center;font-size:10.2px;line-height:12px;color:#222;">14</div>
<div style="position:absolute;left:1.5px;top:455.46px;width:42px;text-align:center;font-size:10.2px;line-height:12px;color:#222;">15</div>
<div style="position:absolute;left:1.5px;top:475.15px;width:42px;text-align:center;font-size:10.2px;line-height:12px;color:#222;">16</div>
<div style="position:absolute;left:1.5px;top:494.84px;width:42px;text-align:center;font-size:10.2px;line-height:12px;color:#222;">17</div>
<div style="position:absolute;left:1.5px;top:514.53px;width:42px;text-align:center;font-size:10.2px;line-height:12px;color:#222;">18</div>
<div style="position:absolute;left:1.5px;top:534.22px;width:42px;text-align:center;font-size:10.2px;line-height:12px;color:#222;">19</div>
<div style="position:absolute;left:1.5px;top:553.91px;width:42px;text-align:center;font-size:10.2px;line-height:12px;color:#222;">20</div>
<div style="position:absolute;left:1.5px;top:573.60px;width:42px;text-align:center;font-size:10.2px;line-height:12px;color:#222;">21</div>
<div style="position:absolute;left:1.5px;top:593.29px;width:42px;text-align:center;font-size:10.2px;line-height:12px;color:#222;">22</div>
<div style="position:absolute;left:1.5px;top:612.98px;width:42px;text-align:center;font-size:10.2px;line-height:12px;color:#222;">23</div>
<div style="position:absolute;left:1.5px;top:632.67px;width:42px;text-align:center;font-size:10.2px;line-height:12px;color:#222;">24</div>
<div style="position:absolute;left:1.5px;top:652.36px;width:42px;text-align:center;font-size:10.2px;line-height:12px;color:#222;">25</div>
<div style="position:absolute;left:1.5px;top:672.05px;width:42px;text-align:center;font-size:10.2px;line-height:12px;color:#222;">26</div>
<div style="position:absolute;left:1px;top:196px;width:43px;height:1px;background:#d9d9d9;"></div>
<div style="position:absolute;left:1px;top:216px;width:43px;height:1px;background:#d9d9d9;"></div>
<div style="position:absolute;left:1px;top:235px;width:43px;height:1px;background:#d9d9d9;"></div>
<div style="position:absolute;left:1px;top:255px;width:43px;height:1px;background:#d9d9d9;"></div>
<div style="position:absolute;left:1px;top:275px;width:43px;height:1px;background:#d9d9d9;"></div>
<div style="position:absolute;left:1px;top:294px;width:43px;height:1px;background:#d9d9d9;"></div>
<div style="position:absolute;left:1px;top:314px;width:43px;height:1px;background:#d9d9d9;"></div>
<div style="position:absolute;left:1px;top:334px;width:43px;height:1px;background:#d9d9d9;"></div>
<div style="position:absolute;left:1px;top:353px;width:43px;height:1px;background:#d9d9d9;"></div>
<div style="position:absolute;left:1px;top:373px;width:43px;height:1px;background:#d9d9d9;"></div>
<div style="position:absolute;left:1px;top:393px;width:43px;height:1px;background:#d9d9d9;"></div>
<div style="position:absolute;left:1px;top:412px;width:43px;height:1px;background:#d9d9d9;"></div>
<div style="position:absolute;left:1px;top:432px;width:43px;height:1px;background:#d9d9d9;"></div>
<div style="position:absolute;left:1px;top:452px;width:43px;height:1px;background:#d9d9d9;"></div>
<div style="position:absolute;left:1px;top:472px;width:43px;height:1px;background:#d9d9d9;"></div>
<div style="position:absolute;left:1px;top:491px;width:43px;height:1px;background:#d9d9d9;"></div>
<div style="position:absolute;left:1px;top:511px;width:43px;height:1px;background:#d9d9d9;"></div>
<div style="position:absolute;left:1px;top:531px;width:43px;height:1px;background:#d9d9d9;"></div>
<div style="position:absolute;left:1px;top:550px;width:43px;height:1px;background:#d9d9d9;"></div>
<div style="position:absolute;left:1px;top:570px;width:43px;height:1px;background:#d9d9d9;"></div>
<div style="position:absolute;left:1px;top:590px;width:43px;height:1px;background:#d9d9d9;"></div>
<div style="position:absolute;left:1px;top:609px;width:43px;height:1px;background:#d9d9d9;"></div>
<div style="position:absolute;left:1px;top:629px;width:43px;height:1px;background:#d9d9d9;"></div>
<div style="position:absolute;left:1px;top:649px;width:43px;height:1px;background:#d9d9d9;"></div>
<div style="position:absolute;left:1px;top:668px;width:43px;height:1px;background:#d9d9d9;"></div>
<div style="position:absolute;left:1px;top:688px;width:43px;height:1px;background:#d9d9d9;"></div>
<div style="position:absolute;left:43px;top:176px;width:1px;height:511px;background:#d2d2d2;"></div>
<div style="position:absolute;left:1px;top:176px;width:1009px;height:1px;background:#d2d2d2;"></div>
<div style="position:absolute;left:1px;top:172px;width:43px;height:4px;background:#c9c9c9;"></div>
<div style="position:absolute;left:43px;top:177px;width:194px;height:20px;border:2px solid #4d8ef4;"></div>
<div style="position:absolute;left:586px;top:314px;width:136px;height:21px;border:2px solid #17a261;"></div>
<div style="position:absolute;left:1px;top:687px;width:1023px;height:14px;background:#f8f8f8;"></div>
<div style="position:absolute;left:43px;top:687px;width:2px;height:14px;background:#dfe3e8;"></div>
<div style="position:absolute;left:1009px;top:176px;width:1px;height:525px;background:#dcdcdc;"></div>
<div style="position:absolute;left:1px;top:686px;width:1023px;height:1px;background:#e4e4e4;"></div>
<div style="position:absolute;left:1px;top:701px;width:1023px;height:1px;background:#c8c8c8;"></div>
<div style="position:absolute;left:1px;top:702px;width:1023px;height:35px;background:#f1f1f1;"></div>
<div style="position:absolute;left:48px;top:713.0px;width:11px;height:1.8px;background:#6a6a6a;"></div>
<div style="position:absolute;left:48px;top:715.8px;width:11px;height:1.8px;background:#6a6a6a;"></div>
<div style="position:absolute;left:48px;top:718.6px;width:11px;height:1.8px;background:#6a6a6a;"></div>
<div style="position:absolute;left:48px;top:721.4px;width:11px;height:1.8px;background:#6a6a6a;"></div>
<div style="position:absolute;left:81.6px;top:701px;width:90px;height:27px;background:#fff;box-shadow:0 1px 1.5px rgba(0,0,0,.3);"></div>
<div style="position:absolute;left:87.9px;top:707px;font-size:12px;line-height:14px;color:#222;white-space:nowrap;">calculadora</div>
<svg style="position:absolute;left:158px;top:714px" width="6" height="4"><path d="M0 0 H6 L3 3Z" fill="#b5b5b5"/></svg>
<svg style="position:absolute;left:996px;top:710px" width="19" height="21" viewBox="0 0 19 21"><path d="M2.5 1 H16.5 Q18 1 18 2.5 V15.5 Q18 17 16.5 17 H11.5 L9.5 19.8 L7.5 17 H2.5 Q1 17 1 15.5 V2.5 Q1 1 2.5 1Z" fill="#c9c9c9"/><path d="M9.5 3.8 Q10.2 8.2 14.2 9 Q10.2 9.8 9.5 14.2 Q8.8 9.8 4.8 9 Q8.8 8.2 9.5 3.8Z" fill="#fff"/></svg>
<div style="position:absolute;left:0px;top:0px;width:1px;height:737px;background:#a9a9a9;"></div>
</body></html>
